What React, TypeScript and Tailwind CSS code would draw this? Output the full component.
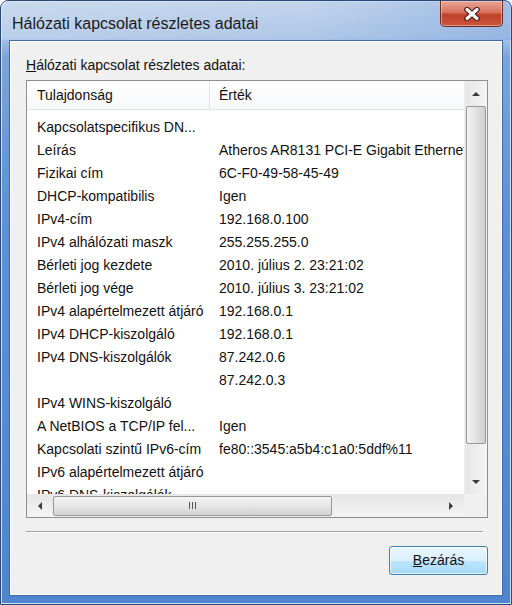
const rows: [string, string][] = [
  ["Kapcsolatspecifikus DN...", ""],
  ["Leírás", "Atheros AR8131 PCI-E Gigabit Ethernet Controller"],
  ["Fizikai cím", "6C-F0-49-58-45-49"],
  ["DHCP-kompatibilis", "Igen"],
  ["IPv4-cím", "192.168.0.100"],
  ["IPv4 alhálózati maszk", "255.255.255.0"],
  ["Bérleti jog kezdete", "2010. július 2. 23:21:02"],
  ["Bérleti jog vége", "2010. július 3. 23:21:02"],
  ["IPv4 alapértelmezett átjáró", "192.168.0.1"],
  ["IPv4 DHCP-kiszolgáló", "192.168.0.1"],
  ["IPv4 DNS-kiszolgálók", "87.242.0.6"],
  ["", "87.242.0.3"],
  ["IPv4 WINS-kiszolgáló", ""],
  ["A NetBIOS a TCP/IP fel...", "Igen"],
  ["Kapcsolati szintű IPv6-cím", "fe80::3545:a5b4:c1a0:5ddf%11"],
  ["IPv6 alapértelmezett átjáró", ""],
  ["IPv6 DNS-kiszolgálók", ""],
];

function Arrow({ dir }: { dir: "up" | "down" | "left" | "right" }) {
  const pts = {
    up: "0,5 4,1 8,5",
    down: "0,1 4,5 8,1",
    left: "5,0 1,4 5,8",
    right: "1,0 5,4 1,8",
  }[dir];
  const vertical = dir === "up" || dir === "down";
  return (
    <svg width={vertical ? 8 : 6} height={vertical ? 6 : 8} viewBox={vertical ? "0 0 8 6" : "0 0 6 8"}>
      <polygon points={pts} fill="#3c3c3c" />
    </svg>
  );
}

function CloseGlyph() {
  return (
    <svg width="20" height="14" viewBox="0 0 20 14">
      <path d="M5 2.5 L15 11.5 M15 2.5 L5 11.5" stroke="#4a1a12" strokeWidth="5.5" strokeLinecap="round" />
      <path d="M5 2.5 L15 11.5 M15 2.5 L5 11.5" stroke="#ffffff" strokeWidth="3.2" strokeLinecap="round" />
    </svg>
  );
}

export default function App() {
  return (
    <div className="w-[512px] h-[605px] flex flex-col rounded-t-[8px] border border-[#2a4878] bg-[linear-gradient(to_bottom,#bdd1ea_0px,#a9c3e6_36px,#7aa5dd_56px,#5f92d6_200px,#4f84cf_100%)] shadow-[inset_0_0_0_1px_#cfe0f5] font-['Liberation_Sans',Arial,sans-serif] text-[#111]">
      <div className="h-[39px] flex justify-between items-start pl-[11px] pr-[8px] bg-[linear-gradient(to_right,rgba(255,255,255,0.2),rgba(255,255,255,0.08)_60%,rgba(90,140,215,0.25))]">
        <div className="pt-[13px] text-[16px] leading-[19px] text-[#1b1b1b]">Hálózati kapcsolat részletes adatai</div>
        <div className="w-[63px] h-[26px] flex items-center justify-center rounded-b-[5px] border border-t-0 border-[#6a2a1d] bg-[linear-gradient(to_bottom,#e8a595_0%,#d9745f_45%,#c0402a_55%,#c9553c_100%)] shadow-[inset_0_0_0_1px_rgba(255,220,210,0.5)]">
          <CloseGlyph />
        </div>
      </div>

      <div className="flex-1 mx-[8px] mb-[8px] border border-[#3f6aa6] bg-[#f0f0f0] shadow-[inset_0_0_0_1px_#ffffff] flex flex-col px-[16px]">
        <div className="pt-[16px] text-[14px] leading-[17px]">
          <span className="underline">H</span>álózati kapcsolat részletes adatai:
        </div>

        <div className="mt-[6px] w-[462px] h-[438px] border border-[#8e8f8f] bg-white flex flex-col">
          <div className="flex h-[413px]">
            <div className="w-[437px] overflow-hidden">
              <div className="h-[29px] flex text-[14px] border-b border-[#e2e4e8] bg-[linear-gradient(to_bottom,#ffffff,#f7f8fa)]">
                <div className="w-[183px] pl-[10px] flex items-center border-r border-[#e3e5e8]">Tulajdonság</div>
                <div className="pl-[9px] flex items-center">Érték</div>
              </div>
              <div className="pt-[6px]">
                {rows.map(([k, v], i) => (
                  <div key={i} className="h-[23px] flex items-center text-[14px] whitespace-nowrap">
                    <div className="w-[183px] pl-[10px] shrink-0">{k}</div>
                    <div className="pl-[9px]">{v}</div>
                  </div>
                ))}
              </div>
            </div>
            <div className="w-[23px] flex flex-col bg-[linear-gradient(to_right,#e6e6e6,#f4f4f4)] border-l border-[#ededed]">
              <div className="h-[25px] flex items-center justify-center">
                <Arrow dir="up" />
              </div>
              <div className="mx-[1px] h-[338px] rounded-[2px] border border-[#979797] bg-[linear-gradient(to_right,#f2f2f2,#e2e2e2_50%,#cfcfcf)]" />
              <div className="flex-1 flex items-end justify-center pb-[9px]">
                <Arrow dir="down" />
              </div>
            </div>
          </div>
          <div className="flex flex-1">
            <div className="w-[437px] flex items-center bg-[linear-gradient(to_bottom,#e6e6e6,#f4f4f4)]">
              <div className="w-[26px] flex justify-center">
                <Arrow dir="left" />
              </div>
              <div className="w-[279px] h-[20px] rounded-[2px] border border-[#979797] bg-[linear-gradient(to_bottom,#f4f4f4,#e6e6e6_50%,#d2d2d2)] flex items-center justify-center gap-[2px]">
                <span className="w-[1px] h-[7px] bg-[#555]" />
                <span className="w-[1px] h-[7px] bg-[#555]" />
                <span className="w-[1px] h-[7px] bg-[#555]" />
              </div>
              <div className="flex-1 flex justify-end pr-[10px]">
                <Arrow dir="right" />
              </div>
            </div>
            <div className="flex-1 bg-[#f0f0f0]" />
          </div>
        </div>

        <div className="mt-[13px] w-[457px] h-[2px] border-t border-[#a0a0a0] bg-white" />

        <div className="mt-[13px] w-[462px] flex justify-end">
          <button className="w-[99px] h-[29px] rounded-[3px] border border-[#3c7fb1] bg-[linear-gradient(to_bottom,#eaf6fd_0%,#d9f0fc_50%,#bee6fd_51%,#a7d9f5_100%)] shadow-[inset_0_0_0_1px_rgba(255,255,255,0.7)] text-[14px] leading-[17px] text-[#111]">
            <span className="underline">B</span>ezárás
          </button>
        </div>
      </div>
    </div>
  );
}
